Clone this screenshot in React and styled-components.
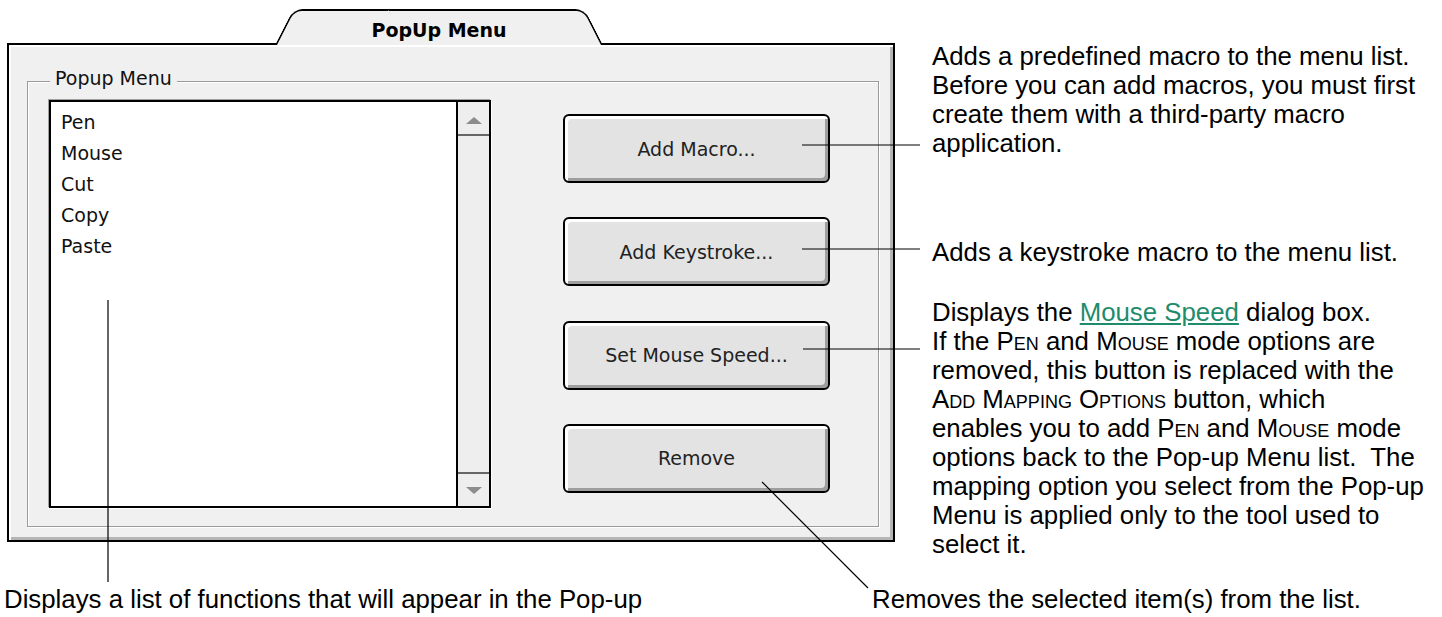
import styled, { createGlobalStyle } from 'styled-components';

const GlobalStyle = createGlobalStyle`
  html, body {
    margin: 0;
    padding: 0;
    background: #fff;
    overflow: hidden;
  }
  body {
    font-family: "Liberation Sans", Arial, sans-serif;
  }
`;

const items = ['Pen', 'Mouse', 'Cut', 'Copy', 'Paste'];
const buttons = ['Add Macro...', 'Add Keystroke...', 'Set Mouse Speed...', 'Remove'];

export default function App() {
  return (
    <>
      <GlobalStyle />
      <Page>
        <WindowCell>
          <Window>
            <TabRow>
              <Tab>PopUp Menu</Tab>
            </TabRow>
            <Body>
              <GroupBox>
                <GroupLabel>Popup Menu</GroupLabel>
                <ListBox>
                  <Items>
                    {items.map((item) => (
                      <Item key={item}>{item}</Item>
                    ))}
                  </Items>
                  <Scrollbar>
                    <ArrowBox $up>
                      <Arrow $up />
                    </ArrowBox>
                    <Track />
                    <ArrowBox>
                      <Arrow />
                    </ArrowBox>
                  </Scrollbar>
                </ListBox>
                <ButtonColumn>
                  {buttons.map((label) => (
                    <MacButton key={label}>{label}</MacButton>
                  ))}
                </ButtonColumn>
              </GroupBox>
            </Body>
          </Window>
        </WindowCell>

        <Notes>
          <NoteText $top={42}>
            Adds a predefined macro to the menu list.<br />
            Before you can add macros, you must first<br />
            create them with a third-party macro<br />
            application.
          </NoteText>
          <NoteText $top={80}>Adds a keystroke macro to the menu list.</NoteText>
          <NoteText $top={31}>
            Displays the <DocLink>Mouse Speed</DocLink> dialog box.<br />
            If the <Caps>Pen</Caps> and <Caps>Mouse</Caps> mode options are<br />
            removed, this button is replaced with the<br />
            <Caps>Add Mapping Options</Caps> button, which<br />
            enables you to add <Caps>Pen</Caps> and <Caps>Mouse</Caps> mode<br />
            options back to the Pop-up Menu list.&nbsp; The<br />
            mapping option you select from the Pop-up<br />
            Menu is applied only to the tool used to<br />
            select it.
          </NoteText>
        </Notes>

        <CaptionRow>
          <NoteText>Displays a list of functions that will appear in the Pop-up</NoteText>
          <NoteText>Removes the selected item(s) from the list.</NoteText>
        </CaptionRow>

        <Callouts viewBox="0 0 1442 617">
          <line x1="802" y1="145" x2="920" y2="145" />
          <line x1="802" y1="249" x2="920" y2="249" />
          <line x1="803" y1="349" x2="920" y2="349" />
          <line x1="762" y1="482" x2="868" y2="588" />
          <line x1="108" y1="300" x2="108" y2="582" />
        </Callouts>
      </Page>
    </>
  );
}

const Page = styled.div`
  position: relative;
  width: 1442px;
  height: 617px;
  overflow: hidden;
  display: grid;
  grid-template-columns: 932px 1fr;
  grid-template-rows: 585px auto;
`;

const WindowCell = styled.div`
  padding: 9px 0 0 7px;
`;

const Window = styled.div`
  width: 888px;
  display: flex;
  flex-direction: column;
`;

const TabRow = styled.div`
  display: flex;
  padding-left: 268px;
`;

const Tab = styled.div`
  position: relative;
  z-index: 1;
  width: 328px;
  height: 36px;
  margin-bottom: -2px;
  box-sizing: border-box;
  padding-top: 10px;
  text-align: center;
  font: bold 19px/22px "DejaVu Sans", sans-serif;
  color: #000;

  &::before,
  &::after {
    content: "";
    position: absolute;
    top: 0;
    bottom: 0;
    width: 60%;
    box-sizing: border-box;
    background: #f0f0f0;
    border-top: 2px solid #000;
    z-index: -1;
  }

  &::before {
    left: 0;
    border-left: 2px solid #000;
    border-top-left-radius: 9px;
    transform: skewX(-27deg);
    transform-origin: 0 100%;
  }

  &::after {
    right: 0;
    border-right: 2px solid #000;
    border-top-right-radius: 9px;
    transform: skewX(27deg);
    transform-origin: 100% 100%;
  }
`;

const Body = styled.div`
  position: relative;
  height: 499px;
  box-sizing: border-box;
  border: 2px solid #000;
  background: #f0f0f0;
  box-shadow: inset 2px 2px 0 #fff, inset -3px -3px 0 #b5b5b5;
  padding: 36px 14px 13px 18px;
  display: flex;
`;

const GroupBox = styled.div`
  position: relative;
  flex: 1;
  display: flex;
  align-items: flex-start;
  padding: 18px 0 0 21px;
  border: 1px solid #9a9a9a;
  box-shadow: inset 1px 1px 0 #fff, 1px 1px 0 #fff;
`;

const GroupLabel = styled.div`
  position: absolute;
  top: -15px;
  left: 22px;
  padding: 0 5px;
  background: #f0f0f0;
  font: 19px/22px "DejaVu Sans", sans-serif;
  color: #111;
`;

const ListBox = styled.div`
  width: 442px;
  height: 408px;
  box-sizing: border-box;
  border: 2px solid #000;
  background: #fff;
  box-shadow: -1px -1px 0 #a0a0a0, 1px 1px 0 #fff;
  display: flex;
`;

const Items = styled.ul`
  flex: 1;
  margin: 0;
  padding: 5px 10px;
  list-style: none;
`;

const Item = styled.li`
  font: 19px/31px "DejaVu Sans", sans-serif;
  color: #111;
`;

const Scrollbar = styled.div`
  width: 31px;
  border-left: 2px solid #000;
  background: #eeeeee;
  display: flex;
  flex-direction: column;
`;

const ArrowBox = styled.div`
  height: 32px;
  display: flex;
  align-items: center;
  justify-content: center;
  border-${(p) => (p.$up ? 'bottom' : 'top')}: 2px solid #666;
`;

const Track = styled.div`
  flex: 1;
`;

const Arrow = styled.div`
  width: 0;
  height: 0;
  border-left: 8px solid transparent;
  border-right: 8px solid transparent;
  ${(p) =>
    p.$up
      ? 'border-bottom: 7px solid #8c8c8c; margin-top: 4px;'
      : 'border-top: 7px solid #8c8c8c;'}
`;

const ButtonColumn = styled.div`
  margin: 14px 0 0 72px;
  height: 379px;
  display: flex;
  flex-direction: column;
  justify-content: space-between;
`;

const MacButton = styled.button`
  width: 267px;
  height: 69px;
  box-sizing: border-box;
  border: 2px solid #000;
  border-radius: 6px;
  background: #e3e3e3;
  box-shadow: inset 3px 3px 0 #fff, inset -3px -3px 0 #9e9e9e;
  font: 19px/22px "DejaVu Sans", sans-serif;
  color: #222;
  padding: 0;
  cursor: pointer;
`;

const Notes = styled.div`
  display: flex;
  flex-direction: column;
`;

const NoteText = styled.p`
  margin: ${(p) => p.$top || 0}px 0 0 0;
  font-size: 25.8px;
  line-height: 29px;
  white-space: nowrap;
  color: #000;
`;

const DocLink = styled.span`
  color: #1e8c6b;
  text-decoration: underline;
  text-underline-offset: 2px;
`;

const Caps = styled.span`
  font-variant: small-caps;
`;

const CaptionRow = styled.div`
  grid-column: 1 / -1;
  display: grid;
  grid-template-columns: 868px 1fr;
  padding-left: 4px;
`;

const Callouts = styled.svg`
  position: absolute;
  inset: 0;
  width: 1442px;
  height: 617px;
  pointer-events: none;
  z-index: 5;

  line {
    stroke: #000;
    stroke-width: 1.2;
  }
`;
